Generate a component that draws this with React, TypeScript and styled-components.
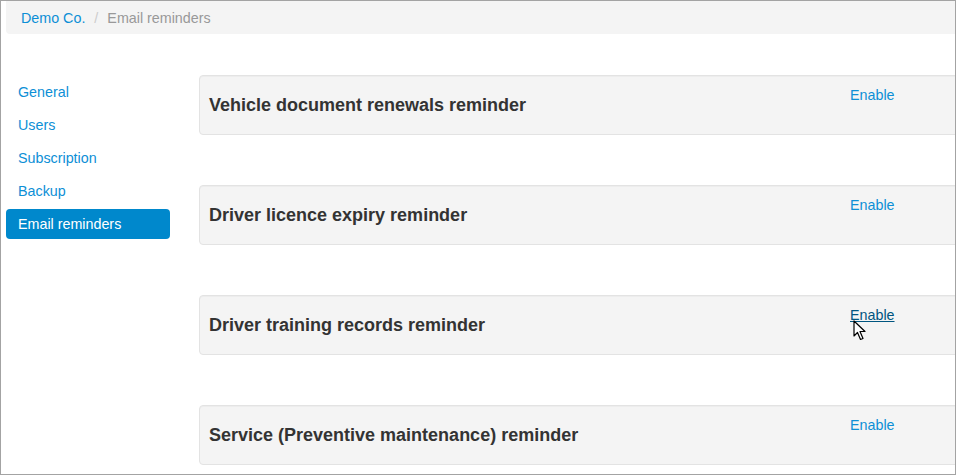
import { createGlobalStyle, styled } from "styled-components";

const GlobalStyle = createGlobalStyle`
  html, body {
    margin: 0;
    padding: 0;
    background: #ffffff;
  }
  body {
    font-family: "Liberation Sans", Arial, sans-serif;
    font-size: 14.3px;
    line-height: 20px;
    color: #333333;
  }
`;

const navItems = ["General", "Users", "Subscription", "Backup", "Email reminders"];

const reminders = [
  "Vehicle document renewals reminder",
  "Driver licence expiry reminder",
  "Driver training records reminder",
  "Service (Preventive maintenance) reminder",
];

function Cursor() {
  return (
    <CursorMark width="14" height="21" viewBox="0 0 14 21">
      <path
        d="M1 1 L1 16 L4.5 12.5 L7.5 19.5 L10 18.5 L7 11.5 L12 11.5 Z"
        fill="#ffffff"
        stroke="#000000"
        strokeWidth="1.2"
        strokeLinejoin="round"
      />
    </CursorMark>
  );
}

function App() {
  return (
    <Frame>
      <GlobalStyle />
      <Breadcrumb>
        <Crumb href="#">Demo Co.</Crumb>
        <Divider>/</Divider>
        <Current>Email reminders</Current>
      </Breadcrumb>
      <Body>
        <Sidebar>
          {navItems.map((item) => (
            <NavLink key={item} href="#" $active={item === "Email reminders"}>
              {item}
            </NavLink>
          ))}
        </Sidebar>
        <Main>
          {reminders.map((title, i) => (
            <Panel key={title}>
              <PanelTitle>{title}</PanelTitle>
              <Actions>
                <EnableLink href="#" $hover={i === 2}>
                  Enable
                </EnableLink>
                {i === 2 && <Cursor />}
              </Actions>
            </Panel>
          ))}
        </Main>
      </Body>
    </Frame>
  );
}

export default App;

const Frame = styled.div`
  position: relative;
  width: 956px;
  height: 475px;
  box-sizing: border-box;
  border: 1px solid #a3a3a3;
  overflow: hidden;
`;

const Breadcrumb = styled.div`
  display: flex;
  align-items: center;
  margin-left: 5px;
  width: 1000px;
  height: 33px;
  padding: 0 15px;
  background: #f4f4f4;
  border-radius: 0 0 0 4px;
`;

const Crumb = styled.a`
  color: #0d8fd6;
  text-decoration: none;
`;

const Divider = styled.span`
  color: #cccccc;
  padding: 0 9px;
`;

const Current = styled.span`
  color: #999999;
`;

const Body = styled.div`
  display: flex;
  gap: 29px;
  padding-left: 5px;
  margin-top: 41px;
`;

const Sidebar = styled.nav`
  display: flex;
  flex-direction: column;
  gap: 3px;
  width: 164px;
  flex-shrink: 0;
  padding-top: 2px;
`;

const NavLink = styled.a<{ $active?: boolean }>`
  display: block;
  height: 30px;
  line-height: 30px;
  padding: 0 12px;
  border-radius: 4px;
  text-decoration: none;
  color: ${(p) => (p.$active ? "#ffffff" : "#0d8fd6")};
  background: ${(p) => (p.$active ? "#0088cc" : "transparent")};
`;

const Main = styled.div`
  display: flex;
  flex-direction: column;
  gap: 50px;
  flex-shrink: 0;
`;

const Panel = styled.div`
  display: flex;
  width: 800px;
  height: 60px;
  box-sizing: border-box;
  background: #f4f4f4;
  border: 1px solid #e3e3e3;
  border-radius: 4px;
  box-shadow: inset 0 1px 1px rgba(0, 0, 0, 0.03);
`;

const PanelTitle = styled.h4`
  flex: 1;
  margin: 0;
  padding-left: 9px;
  align-self: center;
  font-size: 18px;
  font-weight: bold;
  line-height: 20px;
  color: #333333;
`;

const Actions = styled.div`
  position: relative;
  width: 148px;
  padding-top: 9px;
`;

const EnableLink = styled.a<{ $hover?: boolean }>`
  color: ${(p) => (p.$hover ? "#005580" : "#0d8fd6")};
  text-decoration: ${(p) => (p.$hover ? "underline" : "none")};
`;

const CursorMark = styled.svg`
  position: absolute;
  left: 3px;
  top: 24px;
`;
